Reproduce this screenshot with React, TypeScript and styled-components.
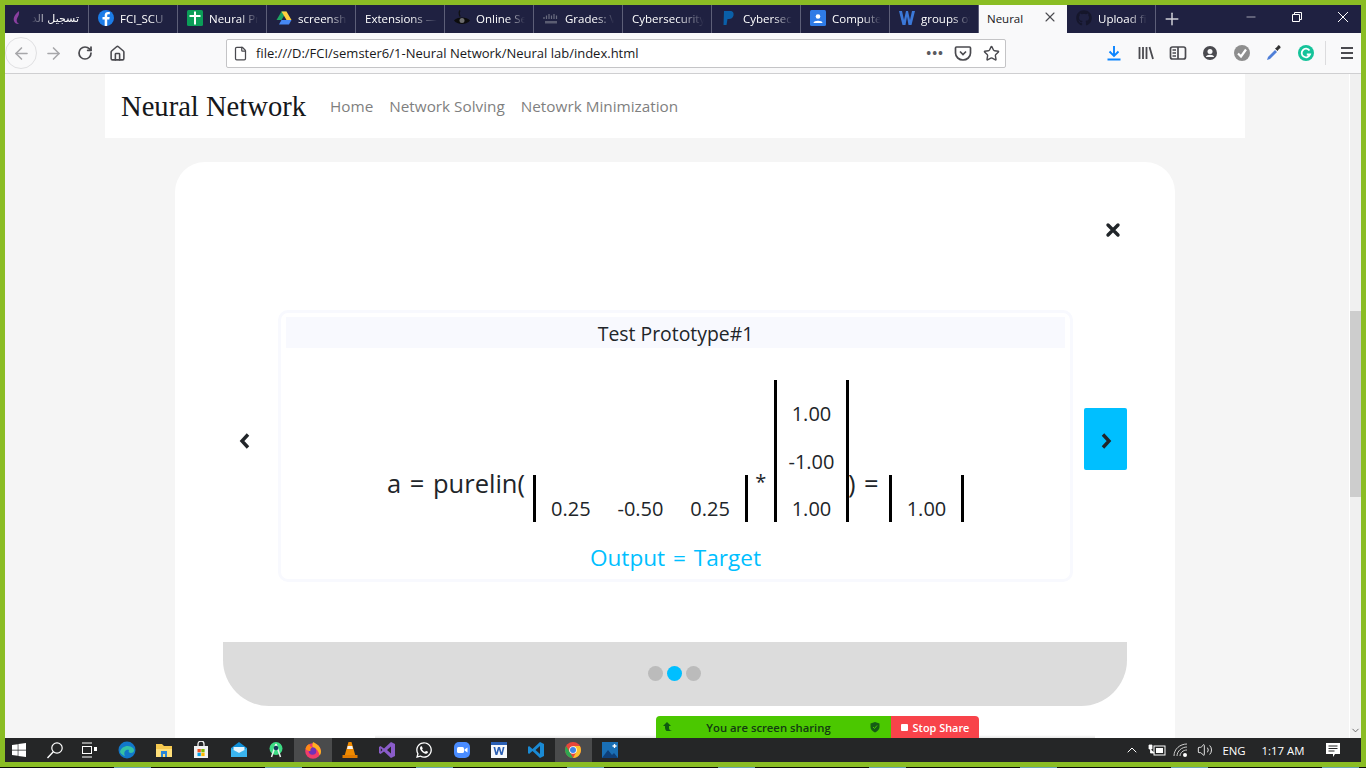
import * as React from "react";
import styled, { createGlobalStyle } from "styled-components";
import { ArrowLeft, ArrowRight, RotateCw, Home, File, Star, Plus, X, Minus, ChevronUp, ChevronDown, Volume2 } from "lucide-react";
import { FaGithub, FaWhatsapp, FaWindows } from "react-icons/fa";

const Global = createGlobalStyle`
    html, body { margin: 0; padding: 0; height: 100%; overflow: hidden; }
    body { font-family: "Open Sans", "DejaVu Sans", sans-serif; }
    * { box-sizing: border-box; }
`;

const Frame = styled.div`
    width: 1366px;
    height: 768px;
    background: #8abd24;
    padding: 5px 5px 0 5px;
    display: flex;
    flex-direction: column;
    overflow: hidden;
`;

const TabBar = styled.div`
    height: 28px;
    flex: none;
    background: #1f2141;
    display: flex;
    overflow: hidden;
`;

const Tab = styled.div<{ $active?: boolean; $w?: number; $pad?: number }>`
    flex: 0 0 ${p => p.$w ?? 89}px;
    padding: 0 0 2px ${p => p.$pad ?? 9}px;
    display: flex;
    align-items: center;
    gap: 6px;
    position: relative;
    overflow: hidden;
    background: ${p => (p.$active ? "#f9f9fa" : "transparent")};
    color: ${p => (p.$active ? "#18181a" : "#fff")};
    border-right: ${p => (p.$active ? "0" : "1px solid #5d5f78")};
    font-size: 11.5px;
    white-space: nowrap;
`;

const TabLabel = styled.span<{ $fade?: boolean; $w?: number }>`
    display: block;
    width: ${p => (p.$w ? `${p.$w}px` : "auto")};
    overflow: hidden;
    ${p => p.$fade && "mask-image: linear-gradient(90deg, #000 62%, transparent 100%);"}
`;

const ArabicLabel = styled.span`
    font-family: "DejaVu Sans", sans-serif;
    font-size: 11px;
    width: 48px;
    overflow: hidden;
    direction: rtl;
    mask-image: linear-gradient(270deg, #000 62%, transparent 100%);
`;

const TabClose = styled.span`
    position: absolute;
    right: 9px;
    top: 4px;
    display: flex;
    color: #4a4a4f;
`;

const NewTab = styled.div`
    flex: 0 0 32px;
    display: flex;
    align-items: center;
    justify-content: center;
    color: #cfcfd6;
`;

const WindowButtons = styled.div`
    margin-left: 40px;
    display: flex;
    flex: none;
    color: #fff;
`;

const WindowButton = styled.div`
    width: 46px;
    padding-bottom: 4px;
    display: flex;
    align-items: center;
    justify-content: center;
`;

const Toolbar = styled.div`
    height: 41px;
    flex: none;
    background: #f9f9fa;
    border-bottom: 1px solid #cfcfd1;
    display: flex;
    align-items: center;
`;

const BackCircle = styled.div`
    width: 32px;
    height: 32px;
    flex: none;
    border: 1px solid #e0e0e2;
    border-radius: 50%;
    display: flex;
    align-items: center;
    justify-content: center;
    color: #a7a7aa;
`;

const ToolButton = styled.div<{ $w?: number; $faded?: boolean }>`
    width: ${p => p.$w ?? 32}px;
    height: 30px;
    flex: none;
    display: flex;
    align-items: center;
    justify-content: center;
    color: ${p => (p.$faded ? "#a7a7aa" : "#4a4a4f")};
`;

const UrlBar = styled.div`
    width: 780px;
    height: 29px;
    flex: none;
    margin-left: 93px;
    background: #fff;
    border: 1px solid #c4c4c6;
    border-radius: 2px;
    display: flex;
    align-items: center;
    padding-left: 6px;
    color: #4a4a4f;
`;

const UrlText = styled.span`
    flex: 1;
    margin-left: 8px;
    font-size: 13px;
    color: #18181a;
    white-space: nowrap;
`;

const UrlDots = styled.span`
    font-size: 13px;
    font-weight: 700;
    letter-spacing: 1px;
    color: #5a5a5f;
    margin-right: 5px;
`;

const ToolGroup = styled.div`
    margin-left: 92px;
    display: flex;
    align-items: center;
`;

const ToolSep = styled.div`
    width: 1px;
    height: 24px;
    background: #dcdcde;
    margin: 0 5px 0 3px;
`;

const PageArea = styled.div`
    flex: 1;
    min-height: 0;
    display: flex;
    position: relative;
    overflow: hidden;
`;

const PageBody = styled.div`
    flex: 1;
    background: #f5f5f5;
    overflow: hidden;
    border-right: 1px solid #fff;
`;

const NavBar = styled.nav`
    width: 1140px;
    height: 64px;
    margin-left: 100px;
    background: #fff;
    display: flex;
    align-items: center;
    padding-left: 16px;
`;

const Brand = styled.a`
    font-family: "Liberation Serif", serif;
    font-size: 28.6px;
    color: #16181b;
    margin: 1px 24px 0 0;
`;

const NavLink = styled.a`
    font-size: 15.3px;
    color: #7f7f7f;
    margin-right: 16px;
`;

const Modal = styled.div`
    width: 1000px;
    height: 640px;
    margin: 24px 0 0 170px;
    background: #fff;
    border-radius: 30px;
    padding: 60px 48px 0;
`;

const CloseRow = styled.div`
    display: flex;
    justify-content: flex-end;
    padding-right: 6px;
    height: 16px;
    color: #212529;
`;

const Carousel = styled.div`
    display: flex;
    align-items: flex-start;
    margin-top: 72px;
`;

const SlideButton = styled.div<{ $on?: boolean }>`
    width: 43px;
    height: 62px;
    flex: none;
    margin-top: 98px;
    padding-top: 4px;
    display: flex;
    align-items: center;
    justify-content: center;
    border-radius: 2px;
    background: ${p => (p.$on ? "#00bfff" : "transparent")};
    color: #212529;
`;

const Card = styled.div`
    width: 795px;
    height: 272px;
    flex: none;
    margin: 0 11px 0 12px;
    border: 3px solid #f8f9fe;
    border-radius: 10px;
    padding: 4px 5px;
`;

const CardTitle = styled.div`
    height: 31px;
    background: #f8f9fe;
    text-align: center;
    font-size: 19.4px;
    line-height: 33px;
    color: #212529;
`;

const Equation = styled.div`
    margin-top: 32px;
    display: flex;
    align-items: flex-end;
    padding-left: 101px;
    color: #212529;
    height: 142px;
`;

const EqText = styled.span<{ $w: number; $lift: number; $size?: number; $pull?: number }>`
    flex: 0 0 ${p => p.$w}px;
    font-size: ${p => p.$size ?? 25.5}px;
    word-spacing: 2px;
    line-height: 32px;
    margin-bottom: ${p => p.$lift}px;
    margin-left: ${p => -(p.$pull ?? 0)}px;
    white-space: pre;
`;

const Matrix = styled.div<{ $cols: number; $col: number }>`
    flex: none;
    display: grid;
    grid-template-columns: repeat(${p => p.$cols}, ${p => p.$col}px);
    grid-auto-rows: 47.33px;
    border-left: 3px solid #000;
    border-right: 3px solid #000;
    justify-items: center;
    align-items: end;
`;

const Cell = styled.span`
    font-size: 20px;
    line-height: 26px;
`;

const Verdict = styled.div`
    margin-top: 21px;
    text-align: center;
    font-size: 22.6px;
    word-spacing: 2px;
    line-height: 30px;
    color: #00bfff;
`;

const Footer = styled.div`
    height: 64px;
    margin-top: 60px;
    padding: 0 2px 2px 0;
    background: #dcdcdc;
    border-radius: 0 0 46px 46px;
    display: flex;
    align-items: center;
    justify-content: center;
    gap: 4px;
`;

const Dot = styled.span<{ $on?: boolean }>`
    width: 15px;
    height: 15px;
    border-radius: 50%;
    background: ${p => (p.$on ? "#00bfff" : "#bbb")};
`;

const Scrollbar = styled.div`
    width: 11px;
    flex: none;
    background: #f0f0f0;
    position: relative;
    color: #606060;
`;

const ScrollThumb = styled.div`
    position: absolute;
    left: 0;
    right: 0;
    top: 237px;
    height: 186px;
    background: #cdcdcd;
`;

const ScrollDown = styled.div`
    position: absolute;
    bottom: 2px;
    left: 0;
    display: flex;
`;

const ShareShadow = styled.div`
    position: absolute;
    left: 370px;
    bottom: 0;
    width: 720px;
    height: 3px;
    background: linear-gradient(180deg, transparent, #e6e6e6);
`;

const ShareBar = styled.div`
    position: absolute;
    left: 651px;
    bottom: 0;
    height: 22px;
    display: flex;
    border-radius: 4px 4px 0 0;
    overflow: hidden;
    font-size: 11.3px;
    font-weight: 600;
`;

const ShareInfo = styled.div`
    width: 235px;
    background: #4bc800;
    color: #123a12;
    display: flex;
    align-items: center;
    padding: 0 10px 0 6px;
`;

const ShareText = styled.span`
    flex: 1;
    text-align: center;
    padding-right: 6px;
`;

const ShareStop = styled.div`
    width: 88px;
    background: #f8434a;
    color: #fff;
    font-size: 10.9px;
    display: flex;
    align-items: center;
    justify-content: center;
    gap: 5px;
`;

const StopSquare = styled.span`
    width: 7px;
    height: 7px;
    background: #fff;
    border-radius: 1px;
`;

const Taskbar = styled.div`
    height: 24px;
    flex: none;
    background: #252627;
    display: flex;
    align-items: stretch;
    color: #fff;
`;

const TaskSlot = styled.div<{ $w?: number; $active?: boolean; $gap?: number }>`
    flex: 0 0 ${p => p.$w ?? 37.2}px;
    margin-left: ${p => p.$gap ?? 0}px;
    display: flex;
    align-items: center;
    justify-content: center;
    background: ${p => (p.$active ? "#4a4b4c" : "transparent")};
`;

const Tray = styled.div`
    margin-left: auto;
    display: flex;
    align-items: stretch;
    padding-right: 14px;
    font-size: 11.4px;
`;

const BottomGap = styled.div`
    height: 5px;
    flex: none;
`;

const BottomEdge = styled.div`
    height: 1px;
    flex: none;
    margin: 0 -5px;
    background: repeating-linear-gradient(90deg, #0a0a0a 0 114px, #6aa3b0 114px 151px);
`;

const Ic = ({ size = 16, children, vb = 16 }: { size?: number; children: React.ReactNode; vb?: number }) => (
    <svg width={size} height={size} viewBox={`0 0 ${vb} ${vb}`} style={{ flex: "none", display: "block" }}>{children}</svg>
);

const ArabicFav = () => <Ic><path d="M10 1C6 4 4 8 5 11c.6 2 3 3.500 5 3-2.500-1.500-3-4-1.500-6.500C9.500 6 10.500 3.500 10 1z" fill="#8a3fa0" /></Ic>;
const FbFav = () => <Ic><circle cx="8" cy="8" r="8" fill="#1c7ce8" /><path d="M9.200 16V9.500h2.100l.4-2.500H9.200V5.500c0-.7.3-1.200 1.300-1.200h1.300V2.100C11.500 2 10.800 2 10 2 8 2 6.700 3.200 6.700 5.300V7H4.500v2.500h2.200V16z" fill="#fff" /></Ic>;
const SheetFav = () => <Ic><rect width="16" height="16" rx="1.500" fill="#0b9d58" /><path d="M2.500 5h4.500V1.500h2V5h4.500v2H9v7.500H7V7H2.500z" fill="#fff" /></Ic>;
const DriveFav = () => <Ic><path d="M5.500 1.500h5L5.500 10H.500z" fill="#1ea362" /><path d="M10.500 1.500l5 8.500h-5l-5-8.500z" fill="#ffcf3f" /><path d="M3 14.500L5.500 10h10l-2.500 4.500z" fill="#4688f4" /></Ic>;
const EyeFav = () => <Ic><path d="M0 10.500C3 6.500 13 6.500 16 10.500 13 15 3 15 0 10.500z" fill="#0c0c0c" /><circle cx="8" cy="10.500" r="2.500" fill="#6d6d6d" /><path d="M6 .5C4.800 2 5 4 6 6.500" fill="none" stroke="#111" strokeWidth="1.300" /></Ic>;
const CiscoFav = () => <Ic><path d="M1 7v2M3.500 5.500v3.500M6 4v5M8.500 5.500v3.500M11 4v5M13.500 5.500v3.500" stroke="#6b6d80" strokeWidth="1.200" /><rect x="2" y="11" width="12" height="2.500" fill="#5b5d72" /></Ic>;
const PayFav = () => <Ic><path d="M3 1h6c3 0 4 2 3.500 4.500C12 8 10 9 8 9H6.500L5.500 15H2.500z" fill="#0a5fa8" /></Ic>;
const ContactFav = () => <Ic><rect width="16" height="16" rx="1.500" fill="#2f7be6" /><circle cx="8" cy="6.500" r="2.300" fill="#fff" /><path d="M3.500 13c0-3 9-3 9 0z" fill="#fff" /></Ic>;
const WordFav = () => <Ic><path d="M0 1h3l2 9 2-9h2l2 9 2-9h3l-3.500 14h-3L8 6.500 6.500 15h-3z" fill="#3b78d8" /></Ic>;
const GitFav = () => <FaGithub size={16} color="#15162b" style={{ flex: "none" }} />;

const PocketIcon = () => <Ic size={18} vb={18}><path d="M2.500 3h13c.6 0 1 .4 1 1v5c0 4-3.500 7-7.500 7s-7.500-3-7.500-7V4c0-.6.4-1 1-1z" fill="none" stroke="#4a4a4f" strokeWidth="1.700" /><path d="M6 7.500l3 3 3-3" fill="none" stroke="#4a4a4f" strokeWidth="1.700" /></Ic>;
const DownloadIcon = () => <Ic size={18} vb={18}><path d="M9 2v10M4.500 7.500L9 12l4.500-4.500" fill="none" stroke="#0a84ff" strokeWidth="1.900" /><path d="M2.500 15.500h13" stroke="#0a84ff" strokeWidth="2" /></Ic>;
const LibraryIcon = () => <Ic size={18} vb={18}><path d="M2.500 3v12M6 3v12M9.500 3v12M12.500 3l3.500 12" stroke="#4a4a4f" strokeWidth="1.800" /></Ic>;
const SidebarIcon = () => <Ic size={18} vb={18}><rect x="1.500" y="3" width="15" height="12" rx="2" fill="none" stroke="#4a4a4f" strokeWidth="1.700" /><path d="M3.500 6h3.500M3.500 9h3.500M3.500 12h3.500" stroke="#4a4a4f" strokeWidth="1.500" /><path d="M9 3v12" stroke="#4a4a4f" strokeWidth="1.700" /></Ic>;
const AccountIcon = () => <Ic size={18} vb={18}><circle cx="9" cy="9" r="7" fill="#4a4a4f" /><circle cx="9" cy="7.500" r="2.500" fill="#f9f9fa" /><path d="M4.800 13c1-3 7.400-3 8.400 0z" fill="#f9f9fa" /></Ic>;
const CheckIcon = () => <Ic size={18} vb={18}><circle cx="9" cy="9" r="8" fill="#8e8e8e" /><path d="M5 9.500l3 3 5-7" fill="none" stroke="#fff" strokeWidth="2.200" /></Ic>;
const DropperIcon = () => <Ic size={18} vb={18}><path d="M2 16l1-3 7-7 2 2-7 7z" fill="#4f7fd8" /><path d="M10 4.500l2-1.500 1-1.500c1-.8 3 1 2.500 2.500l-1.500 1-1.500 2z" fill="#333" /></Ic>;
const GrammarlyIcon = () => <Ic size={18} vb={18}><circle cx="9" cy="9" r="8" fill="#15c39a" /><path d="M12.500 6.500A4.300 4.300 0 1 0 13 10.500H9.800" fill="none" stroke="#fff" strokeWidth="1.800" /></Ic>;
const MenuIcon = () => <Ic size={18} vb={18}><path d="M3 4h12M3 9h12M3 14h12" stroke="#4a4a4f" strokeWidth="1.800" /></Ic>;

const CloseGlyph = () => <Ic size={16}><path d="M3 3l10 10M13 3L3 13" stroke="#212529" strokeWidth="3.400" strokeLinecap="round" /></Ic>;
const PrevGlyph = () => <Ic size={16}><path d="M11 1.500L5 8l6 6.500" fill="none" stroke="#212529" strokeWidth="3.400" /></Ic>;
const NextGlyph = () => <Ic size={16}><path d="M5 1.500L11 8l-6 6.500" fill="none" stroke="#212529" strokeWidth="3.400" /></Ic>;
const WindowClose = () => <Ic size={12} vb={12}><path d="M1 1l10 10M11 1L1 11" stroke="#fff" strokeWidth="1" /></Ic>;

const SearchIcon = () => <Ic size={18} vb={18}><circle cx="11" cy="7" r="5.200" fill="none" stroke="#fff" strokeWidth="1.200" /><path d="M7.300 10.700L1.500 17" stroke="#fff" strokeWidth="1.400" /></Ic>;
const EdgeIcon = () => <Ic size={18} vb={18}><circle cx="9" cy="9" r="8.500" fill="#1277c9" /><path d="M2 11c1-6 9-8 13-4 2 2 1 5-2 5-2 0-3-1-2-3-3-1-6 2-4 6-2-.5-4-2-5-4z" fill="#35c1a4" /></Ic>;
const FolderIcon = () => <Ic size={18} vb={18}><path d="M1 3h6l2 2h8v11H1z" fill="#f6c950" /><rect x="1" y="8" width="16" height="8" fill="#ffdf7a" /><rect x="6" y="10" width="6" height="6" fill="#2b86d8" /><rect x="8" y="13" width="2" height="3" fill="#ffdf7a" /></Ic>;
const StoreIcon = () => <Ic size={18} vb={18}><rect x="2" y="5" width="14" height="12" fill="#f2f2f2" /><path d="M6 5V3a3 3 0 0 1 6 0v2" fill="none" stroke="#f2f2f2" strokeWidth="1.300" /><rect x="5.500" y="8" width="3.300" height="3.300" fill="#f25022" /><rect x="9.300" y="8" width="3.300" height="3.300" fill="#7fba00" /><rect x="5.500" y="11.800" width="3.300" height="3.300" fill="#00a4ef" /><rect x="9.300" y="11.800" width="3.300" height="3.300" fill="#ffb900" /></Ic>;
const MailIcon = () => <Ic size={18} vb={18}><path d="M1 7l8-6 8 6v9H1z" fill="#0f8fd8" /><path d="M1 7l8 5 8-5v9H1z" fill="#3ab4ee" /><path d="M3.500 6h11v3L9 12 3.500 9z" fill="#e4f4fc" /></Ic>;
const AndroidIcon = () => <Ic size={18} vb={18}><circle cx="9" cy="7.500" r="6.500" fill="#3ddc84" /><path d="M9 3L4.500 16M9 3l4.500 13" stroke="#e9f2ee" strokeWidth="1.500" /><circle cx="9" cy="7" r="2.300" fill="#14385a" /></Ic>;
const FirefoxIcon = () => <Ic size={18} vb={18}><circle cx="9" cy="10" r="7.800" fill="#f23c6b" /><path d="M9 1c4 2 8 5 8 9.500 0 1.500-.5 3-1.500 4C15 10 12 7 9 7 8 5 8.500 3 9 1z" fill="#ffb11f" /><circle cx="8.500" cy="10" r="3.800" fill="#7131b8" /><path d="M1.500 8C2 5 4 3.500 5.500 3c0 2 1 3 3 3.500-2 .5-2.500 2-2 3.500-2 0-3.500-.5-5-2z" fill="#ff8a16" /></Ic>;
const VlcIcon = () => <Ic size={18} vb={18}><path d="M7.500 1h3l4 14h-11z" fill="#f08a00" /><path d="M6.700 5h4.600l.7 3H6z" fill="#f4f4f4" /><rect x="1.500" y="14" width="15" height="3" fill="#e07a00" /></Ic>;
const VsIcon = () => <Ic size={18} vb={18}><path d="M13 1l4 2v12l-4 2-7-6.500L2.500 13 1 12V6l1.500-1L6 7.500zM13 5.500L9 9l4 3.500zM2.800 7.200v3.600L4.500 9z" fill="#8a5cc9" /></Ic>;
const ZoomIcon = () => <Ic size={18} vb={18}><rect x="1" y="1" width="16" height="16" rx="5" fill="#4a8cff" /><rect x="4" y="6" width="7" height="6" rx="1.500" fill="#fff" /><path d="M11.500 8.500l3-2v5l-3-2z" fill="#fff" /></Ic>;
const WordIcon = () => <Ic size={18} vb={18}><rect x="1" y="1" width="16" height="16" fill="#f7f9fc" /><rect x="1" y="1" width="16" height="3" fill="#2b5fb4" /><path d="M3.500 6l2 8h1.800L9 8.500 10.700 14h1.800l2-8h-1.700l-1.200 5.500L10 6H8l-1.600 5.500L5.200 6z" fill="#2b5fb4" /></Ic>;
const CodeIcon = () => <Ic size={18} vb={18}><path d="M13 1l4 2v12l-4 2-7.500-7L2 13 1 12V6l1-1 3.500 3zM13 5L8.500 9 13 13z" fill="#1a8ad4" /></Ic>;
const ChromeIcon = () => <Ic size={18} vb={18}><circle cx="9" cy="9" r="8" fill="#e8463a" /><path d="M9 17a8 8 0 0 1-6.900-12L6 11.500z" fill="#2fa750" /><path d="M9 17a8 8 0 0 0 6.900-12H9l3 6.500z" fill="#fbc02d" /><circle cx="9" cy="9" r="3.800" fill="#fff" /><circle cx="9" cy="9" r="3" fill="#3f84e8" /></Ic>;
const PhotosIcon = () => <Ic size={18} vb={18}><rect x="1" y="1" width="16" height="16" fill="#1a6fb5" /><path d="M1 17l6-8 4 5 2-2 4 5z" fill="#0f3f78" /><path d="M13.500 3v4M11.500 5h4" stroke="#fff" strokeWidth="1.300" /></Ic>;

const ShareArrow = () => <Ic size={12} vb={12}><path d="M5 1l4 4H7v2c0 1.500 1 2.500 3 3H4.500C3.500 9 3 8 3 7V5H1z" fill="#0f5a0f" /></Ic>;
const ShieldIcon = () => <Ic size={12} vb={12}><path d="M6 1l4.500 1.500V6c0 2.500-2 4.500-4.500 5.500C3.500 10.500 1.500 8.500 1.500 6V2.500z" fill="#155b15" /><path d="M4 6l1.500 1.500L8 4.500" fill="none" stroke="#4bc800" strokeWidth="1" /></Ic>;

const TaskViewIcon = () => <Ic size={18} vb={18}><path d="M2 2h10M2 16h10" stroke="#fff" /><rect x="2.500" y="5.500" width="9" height="7" fill="none" stroke="#fff" /><rect x="14" y="6" width="3" height="4" fill="#fff" /></Ic>;
const BatteryIcon = () => <Ic size={18} vb={18}><rect x="6" y="5" width="11" height="9" fill="none" stroke="#fff" /><rect x="8" y="7" width="7" height="5" fill="#fff" /><path d="M1 4h3v4H1zM2.500 8v4h4" fill="#fff" stroke="#fff" strokeWidth=".8" /></Ic>;
const WifiIcon = () => <Ic size={18} vb={18}><path d="M2 15C2 8 8 3 15 3M5 15c0-5 5-9 10-9M8 15c0-3 3-6 7-6" fill="none" stroke="#cfcfcf" strokeWidth="1" /><circle cx="13" cy="14" r="2" fill="#fff" /></Ic>;
const NotifIcon = () => <Ic size={18} vb={18}><path d="M2 2h14v11h-5l-2 3v-3H2z" fill="#fff" /><path d="M4.500 5h9M4.500 7.500h9M4.500 10h6" stroke="#252627" /></Ic>;

const tabs: { label: string; icon?: React.ReactNode }[] = [
    { label: "FCI_SCU", icon: <FbFav /> },
    { label: "Neural Project", icon: <SheetFav /> },
    { label: "screenshot", icon: <DriveFav /> },
    { label: "Extensions — Add-ons" },
    { label: "Online Services", icon: <EyeFav /> },
    { label: "Grades: View", icon: <CiscoFav /> },
    { label: "Cybersecurity" },
    { label: "Cybersecurity", icon: <PayFav /> },
    { label: "Computer", icon: <ContactFav /> },
    { label: "groups of", icon: <WordFav /> },
];

const taskApps: { icon: React.ReactNode; active?: boolean }[] = [
    { icon: <EdgeIcon /> },
    { icon: <FolderIcon /> },
    { icon: <StoreIcon /> },
    { icon: <MailIcon /> },
    { icon: <AndroidIcon /> },
    { icon: <FirefoxIcon />, active: true },
    { icon: <VlcIcon /> },
    { icon: <VsIcon /> },
    { icon: <FaWhatsapp size={18} color="#fff" /> },
    { icon: <ZoomIcon /> },
    { icon: <WordIcon /> },
    { icon: <CodeIcon /> },
    { icon: <ChromeIcon />, active: true },
    { icon: <PhotosIcon /> },
];

const App: React.FC = () => {
    return (
        <Frame>
            <Global />
            <TabBar>
                <Tab $w={84} $pad={4}>
                    <ArabicFav />
                    <ArabicLabel>تسجيل الدخول</ArabicLabel>
                </Tab>
                {tabs.map((t, i) => (
                    <Tab key={i}>
                        {t.icon}
                        <TabLabel $fade $w={t.icon ? 49 : 72}>{t.label}</TabLabel>
                    </Tab>
                ))}
                <Tab $active $w={88} $pad={8}>
                    <TabLabel>Neural</TabLabel>
                    <TabClose><X size={16} strokeWidth={1.6} /></TabClose>
                </Tab>
                <Tab>
                    <GitFav />
                    <TabLabel $fade $w={49}>Upload files</TabLabel>
                </Tab>
                <NewTab><Plus size={20} strokeWidth={1.8} /></NewTab>
                <WindowButtons>
                    <WindowButton><Minus size={14} strokeWidth={1} /></WindowButton>
                    <WindowButton>
                        <Ic size={12} vb={12}><path d="M1.500 3.500h7v7h-7zM3.500 3.500v-2h7v7h-2" fill="none" stroke="#fff" /></Ic>
                    </WindowButton>
                    <WindowButton><WindowClose /></WindowButton>
                </WindowButtons>
            </TabBar>

            <Toolbar>
                <BackCircle><ArrowLeft size={19} strokeWidth={2} /></BackCircle>
                <ToolButton $faded><ArrowRight size={19} strokeWidth={2} /></ToolButton>
                <ToolButton><RotateCw size={16} strokeWidth={2.6} /></ToolButton>
                <ToolButton><Home size={17} strokeWidth={2.2} /></ToolButton>
                <UrlBar>
                    <File size={15} strokeWidth={2} />
                    <UrlText>file:///D:/FCI/semster6/1-Neural Network/Neural lab/index.html</UrlText>
                    <UrlDots>•••</UrlDots>
                    <ToolButton $w={28}><PocketIcon /></ToolButton>
                    <ToolButton $w={28}><Star size={17} strokeWidth={2} /></ToolButton>
                </UrlBar>
                <ToolGroup>
                    <ToolButton><DownloadIcon /></ToolButton>
                    <ToolButton><LibraryIcon /></ToolButton>
                    <ToolButton><SidebarIcon /></ToolButton>
                    <ToolButton><AccountIcon /></ToolButton>
                    <ToolButton><CheckIcon /></ToolButton>
                    <ToolButton><DropperIcon /></ToolButton>
                    <ToolButton><GrammarlyIcon /></ToolButton>
                    <ToolSep />
                    <ToolButton><MenuIcon /></ToolButton>
                </ToolGroup>
            </Toolbar>

            <PageArea>
                <PageBody>
                    <NavBar>
                        <Brand>Neural Network</Brand>
                        <NavLink>Home</NavLink>
                        <NavLink>Network Solving</NavLink>
                        <NavLink>Netowrk Minimization</NavLink>
                    </NavBar>
                    <Modal>
                        <CloseRow><CloseGlyph /></CloseRow>
                        <Carousel>
                            <SlideButton><PrevGlyph /></SlideButton>
                            <Card>
                                <CardTitle>Test Prototype#1</CardTitle>
                                <Equation>
                                    <EqText $w={146} $lift={23}>a = purelin(</EqText>
                                    <Matrix $cols={3} $col={69.67}>
                                        <Cell>0.25</Cell>
                                        <Cell>-0.50</Cell>
                                        <Cell>0.25</Cell>
                                    </Matrix>
                                    <EqText $w={26} $lift={24} $size={20}>{" *"}</EqText>
                                    <Matrix $cols={1} $col={69}>
                                        <Cell>1.00</Cell>
                                        <Cell>-1.00</Cell>
                                        <Cell>1.00</Cell>
                                    </Matrix>
                                    <EqText $w={41} $lift={23} $pull={1}>) =</EqText>
                                    <Matrix $cols={1} $col={69}>
                                        <Cell>1.00</Cell>
                                    </Matrix>
                                </Equation>
                                <Verdict>Output = Target</Verdict>
                            </Card>
                            <SlideButton $on><NextGlyph /></SlideButton>
                        </Carousel>
                        <Footer>
                            <Dot />
                            <Dot $on />
                            <Dot />
                        </Footer>
                    </Modal>
                </PageBody>
                <Scrollbar>
                    <ScrollThumb />
                    <ScrollDown><ChevronDown size={11} strokeWidth={2} /></ScrollDown>
                </Scrollbar>
                <ShareShadow />
                <ShareBar>
                    <ShareInfo>
                        <ShareArrow />
                        <ShareText>You are screen sharing</ShareText>
                        <ShieldIcon />
                    </ShareInfo>
                    <ShareStop><StopSquare />Stop Share</ShareStop>
                </ShareBar>
            </PageArea>

            <Taskbar>
                <TaskSlot $w={28}><FaWindows size={16} /></TaskSlot>
                <TaskSlot $w={44}><SearchIcon /></TaskSlot>
                <TaskSlot $w={24}><TaskViewIcon /></TaskSlot>
                <TaskSlot $gap={7.4}>{taskApps[0].icon}</TaskSlot>
                {taskApps.slice(1).map((a, i) => (
                    <TaskSlot key={i} $active={a.active}>{a.icon}</TaskSlot>
                ))}
                <Tray>
                    <TaskSlot $w={24}><ChevronUp size={16} strokeWidth={1.5} /></TaskSlot>
                    <TaskSlot $w={25}><BatteryIcon /></TaskSlot>
                    <TaskSlot $w={24}><WifiIcon /></TaskSlot>
                    <TaskSlot $w={23}><Volume2 size={16} strokeWidth={1.3} /></TaskSlot>
                    <TaskSlot $w={30} $gap={3}>ENG</TaskSlot>
                    <TaskSlot $w={56} $gap={6}>1:17 AM</TaskSlot>
                    <TaskSlot $w={28} $gap={8}><NotifIcon /></TaskSlot>
                </Tray>
            </Taskbar>
            <BottomGap />
            <BottomEdge />
        </Frame>
    );
};

export default App;
